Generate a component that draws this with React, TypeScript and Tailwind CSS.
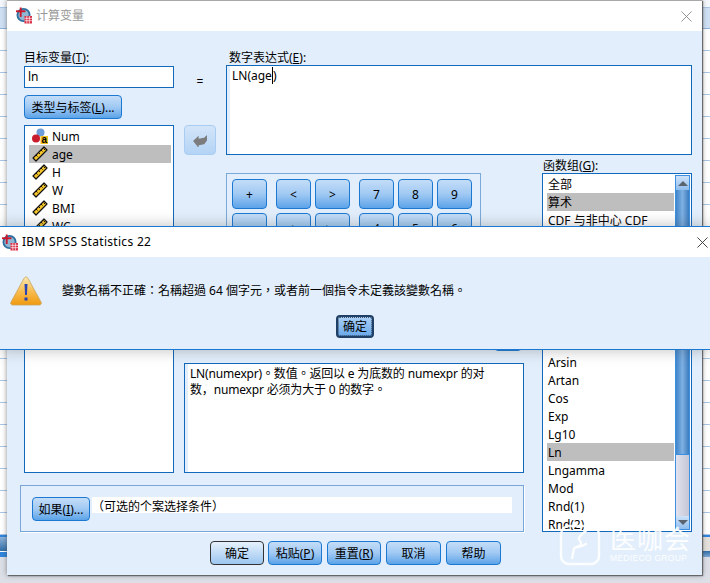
const font = "font-['Noto_Sans','Noto_Sans_CJK_SC',sans-serif]";
const tcFont = "font-['Noto_Sans','Noto_Sans_CJK_TC',sans-serif]";
const blueBtn =
  "flex items-center justify-center rounded-[4px] border border-[#1b79d2] bg-linear-to-b from-[#c4ddf8] via-[#a0c9f3] to-[#5ba3e8] text-[12px] text-black";

function SpssIcon({ className }: { className: string }) {
  return (
    <svg viewBox="0 0 17 17" className={className}>
      <circle cx="8" cy="8" r="7.5" fill="#2f6f9f" />
      <circle cx="8" cy="8" r="5.5" fill="#8fb6d3" />
      <rect x="4" y="0" width="2" height="10" fill="#c9182b" />
      <rect x="0" y="3" width="10" height="2" fill="#c9182b" />
      <rect x="9" y="9" width="8" height="8" fill="#d8324a" />
      <path d="M9 11.5h8M9 14h8M11.5 9v8M14.2 9v8" stroke="#fff" strokeWidth="0.7" />
    </svg>
  );
}

function RulerIcon() {
  return (
    <svg viewBox="0 0 16 16" className="h-[16px] w-[16px] shrink-0">
      <path d="M1 12 12 1l3 3L4 15z" fill="#f5c52c" stroke="#111" strokeWidth="1.2" strokeLinejoin="round" />
      <path d="M4 9l1.5 1.5M6.5 6.5 8 8M9 4l1.5 1.5M11.5 2.5 13 4" stroke="#111" strokeWidth="1" />
    </svg>
  );
}

function NominalIcon() {
  return (
    <svg viewBox="0 0 16 16" className="h-[16px] w-[16px] shrink-0">
      <circle cx="8.5" cy="4.5" r="4" fill="#6f9fd8" />
      <circle cx="4" cy="10.5" r="4" fill="#c91c2c" />
      <rect x="8.5" y="8" width="7.5" height="8" fill="#f4c21f" />
      <text x="12.2" y="15" textAnchor="middle" fontSize="10" fontWeight="700" fontFamily="Liberation Sans, sans-serif" fill="#000">
        a
      </text>
    </svg>
  );
}

function Scrollbar({ thumbBottom }: { thumbBottom?: number }) {
  return (
    <div className="flex w-[15px] shrink-0 flex-col border border-[#3d8fe0] bg-linear-to-r from-[#e2e3ee] to-[#c5c6d6]">
      <div className="flex h-[14px] shrink-0 items-center justify-center bg-linear-to-b from-[#cfe3f8] to-[#8fbdee]">
        <div className="h-0 w-0 border-x-[5px] border-b-[5px] border-x-transparent border-b-[#5a6470]" />
      </div>
      <div
        className="shrink-0 border-b border-[#3d8fe0] bg-linear-to-r from-[#3f86cc] via-[#7fb0e2] to-[#3a7cc0]"
        style={{ height: thumbBottom ?? 60 }}
      />
      <div className="flex-1" />
      <div className="flex h-[13px] shrink-0 items-center justify-center bg-linear-to-b from-[#cfe3f8] to-[#8fbdee]">
        <div className="h-0 w-0 border-x-[5px] border-t-[5px] border-x-transparent border-t-[#5a6470]" />
      </div>
    </div>
  );
}

function FuncList({
  items,
  selected,
  thumb,
  className,
}: {
  items: string[];
  selected: string;
  thumb: number;
  className: string;
}) {
  return (
    <div className={`flex overflow-hidden border border-[#1268bb] bg-white p-[1px] ${className}`}>
      <div className="min-w-0 flex-1 overflow-hidden pl-[3px] pr-[1px]">
        {items.map((t) => (
          <div key={t} className={`flex h-[18px] items-center pl-[1px] pt-[2px] text-[12px] whitespace-nowrap ${t === selected ? "bg-[#bebebe]" : ""}`}>
            {t}
          </div>
        ))}
      </div>
      <Scrollbar thumbBottom={thumb} />
    </div>
  );
}

function Background() {
  const lines = Array.from({ length: 23 }, (_, i) => i);
  return (
    <div className="flex h-[583px] w-[710px] flex-col bg-[#f4f7fb]">
      <div className="h-[8px] border-b border-[#a9c6e6]" />
      <div className="h-[21px] border-b border-[#8db1d8] bg-[#cfe0f5]" />
      {lines.map((i) => (
        <div key={i} className="h-[22px] shrink-0 border-b border-[#a9c6e6] bg-white" />
      ))}
      <div className="h-[2px] bg-[#2f86dc]" />
      <div className="flex h-[14px]">
        <div className="w-[355px] bg-linear-to-b from-[#8fb4dc] to-[#2f6ea8]" />
        <div className="flex-1 bg-[#e4e1dc]" />
      </div>
      <div className="flex h-[6px]">
        <div className="w-[355px] border-t border-white bg-[#2f86dc]" />
        <div className="flex-1 bg-linear-to-b from-[#2f6ea8] to-[#7fa9d6]" />
      </div>
      <div className="flex-1 bg-[#dcdfe6]" />
    </div>
  );
}

function Watermark() {
  return (
    <div className="pointer-events-none absolute left-[559px] top-[523px] flex items-start gap-[9px] text-white/90">
      <svg viewBox="0 0 42 44" className="h-[44px] w-[42px]" fill="none" stroke="currentColor" strokeWidth="2.4" strokeLinecap="round">
        <rect x="2" y="3" width="38" height="38" rx="8" />
        <path d="M30 3c-2 6-9 8-10 12-1 3 3 3 2 6-1 4-6 2-7 5-1 3-1 6-2 9" />
        <path d="M18 24c3 0 6-1 9-3" />
      </svg>
      <div className="flex flex-col items-start">
        <div className="mt-[2px] text-[26px] leading-[28px] tracking-[1px]">医咖会</div>
        <div className="text-[8.5px] leading-[10px] whitespace-nowrap font-['Liberation_Sans',sans-serif] tracking-[0.3px]">MEDIECO GROUP</div>
      </div>
    </div>
  );
}

function ComputeDialog() {
  const vars = ["Num", "age", "H", "W", "BMI", "WC"];
  const keys1 = ["+", "-", "*", "/", "**"];
  const keys2 = ["<", ">", "<=", ">=", "=", "~=", "&", "|", "~", "( )"];
  const keys3 = ["7", "8", "9", "4", "5", "6", "1", "2", "3", "0", ".", ""];
  const key = `${blueBtn} h-[30px] w-[35px] pt-[1px]`;

  return (
    <div className="absolute left-[7px] top-0 flex h-[575px] w-[695px] flex-col border-t border-[#a8a8a8] bg-[#e2eefb] shadow-[0_0_5px_rgba(60,60,60,0.6),1px_1px_1px_rgba(90,90,90,0.8)]">
      <div className="flex h-[30px] shrink-0 items-center bg-white pl-[9px] pr-[10px]">
        <SpssIcon className="mt-[-2px] h-[17px] w-[16px]" />
        <span className="ml-[4px] text-[12px] tracking-[0] text-[#9a9a9a]">计算变量</span>
        <svg viewBox="0 0 12 12" className="ml-auto h-[11px] w-[11px]" stroke="#8a8a8a" strokeWidth="1">
          <path d="M0.5 0.5l11 11M11.5 0.5l-11 11" />
        </svg>
      </div>

      <div className="ml-[13px] grid w-[672px] grid-cols-[154px_52px_298px_168px] grid-rows-[127px_315px_59px]">
        {/* left column */}
        <div className="col-start-1 row-span-2 row-start-1 flex flex-col pl-[4px] pt-[19px]">
          <div className="h-[15px] text-[12px] leading-[15px]">
            目标变量(<u>T</u>):
          </div>
          <div className="mt-[1px] flex h-[22px] items-center border border-[#1268bb] bg-white pl-[3px] text-[12px]">ln</div>
          <div className={`${blueBtn} mt-[7px] h-[24px] w-[98px] pt-[2px]`}>
            类型与标签(<u>L</u>)...
          </div>
          <div className="mt-[6px] min-h-0 flex-1 overflow-hidden border border-[#1268bb] bg-white pl-[4px] pr-[2px] pt-[1px]">
            {vars.map((v, i) => (
              <div key={v} className={`flex h-[18px] items-center gap-[4px] pl-[3px] text-[12px] ${v === "age" ? "bg-[#bebebe]" : ""}`}>
                {i === 0 ? <NominalIcon /> : <RulerIcon />}
                <span className="pt-[2px]">{v}</span>
              </div>
            ))}
          </div>
        </div>

        {/* equals and arrow */}
        <div className="col-start-2 row-start-1 flex flex-col pl-[10px] pt-[44px]">
          <div className="h-[14px] w-[32px] text-center text-[12px] leading-[14px]">=</div>
          <div className="mt-[36px] flex h-[30px] w-[32px] items-center justify-center rounded-[4px] border border-[#a9cdf2] bg-linear-to-b from-[#d3e5f9] to-[#b4d3f5]">
            <svg viewBox="0 0 16 14" className="h-[13px] w-[15px]">
              <path d="M0 7.5 6 2v3l6-1 3-3v6l-3 4-6 1v3z" fill="#7c7c7c" />
            </svg>
          </div>
        </div>

        {/* expression */}
        <div className="col-span-2 col-start-3 row-start-1 flex flex-col pt-[19px]">
          <div className="h-[15px] pl-[3px] text-[12px] leading-[15px]">
            数字表达式(<u>E</u>):
          </div>
          <div className="flex h-[90px] border border-[#1268bb] bg-white pl-[5px] text-[12px] leading-[19px] shadow-[inset_3px_0_0_#e2eefb]">
            <span>
              LN(age
              <span className="border-l border-black" />)
            </span>
          </div>
        </div>

        {/* keypad and help */}
        <div className="col-span-2 col-start-2 row-start-2 flex flex-col pl-[10px]">
          <div className="mt-[15px] flex h-[178px] items-end">
            <div className="ml-[42px] flex h-[176px] w-[255px] gap-[9px] self-start border border-[#7ba9d8] pl-[5px] pt-[5px]">
              <div className="flex flex-col gap-[4px]">
                {keys1.map((k) => (
                  <div key={k} className={key}>
                    {k}
                  </div>
                ))}
              </div>
              <div className="grid h-fit grid-cols-2 gap-[4px]">
                {keys2.map((k) => (
                  <div key={k} className={`${key} text-[11px]`}>
                    {k}
                  </div>
                ))}
              </div>
              <div className="grid h-fit grid-cols-3 gap-[4px]">
                {keys3.map((k, i) => (
                  <div key={i} className={key}>
                    {k}
                  </div>
                ))}
              </div>
            </div>
            <div className={`${blueBtn} ml-[13px] h-[24px] w-[28px]`} />
          </div>
          <div className="mt-[12px] h-[110px] border border-[#1268bb] bg-white pl-[5px] pt-[2px] text-[12px] leading-[16px] tracking-[-0.17px] shadow-[inset_3px_0_0_#e2eefb]">
            <div>
              LN(numexpr)<span className={tcFont}>。</span>数值<span className={tcFont}>。</span>返回以 e 为底数的 numexpr 的对
            </div>
            <div>
              数，numexpr 必须为大于 0 的数字<span className={tcFont}>。</span>
            </div>
          </div>
        </div>

        {/* function lists */}
        <div className="col-start-4 row-span-2 row-start-2 flex flex-col pl-[18px]">
          <div className="h-[15px] pl-[1px] text-[12px] leading-[15px]">
            函数组(<u>G</u>):
          </div>
          <FuncList
            className="h-[130px]"
            selected="算术"
            thumb={60}
            items={["全部", "算术", "CDF 与非中心 CDF", "转换", "当前日期/时间", "日期运算"]}
          />
          <div className="mt-[15px] h-[15px] text-[12px]">函数和特殊变量(F):</div>
          <FuncList
            className="h-[199px]"
            selected="Ln"
            thumb={105}
            items={["Abs", "Arsin", "Artan", "Cos", "Exp", "Lg10", "Ln", "Lngamma", "Mod", "Rnd(1)", "Rnd(2)"]}
          />
        </div>

        {/* if row */}
        <div className="col-span-3 col-start-1 row-start-3 mt-[12px] flex h-[47px] border border-[#79a6d6] pl-[11px] pr-[11px] pt-[11px] shadow-[1px_1px_0_#fff]">
          <div className={`${blueBtn} h-[24px] w-[58px] shrink-0 pt-[2px]`}>
            如果(<u>I</u>)...
          </div>
          <div className="ml-[2px] h-[16px] flex-1 bg-white text-[12px] leading-[19px]">（可选的个案选择条件）</div>
        </div>
      </div>

      <div className="ml-[203px] mt-[9px] flex gap-[5px]">
        <div className="mr-[-1px] flex h-[24px] w-[54px] items-center justify-center rounded-[4px] border border-[#333] bg-linear-to-b from-[#e6f1fc] to-[#9cc6f0] pt-[2px] text-[12px]">确定</div>
        <div className={`${blueBtn} h-[24px] w-[54px] pt-[2px]`}>
          粘贴(<u>P</u>)
        </div>
        <div className={`${blueBtn} h-[24px] w-[54px] pt-[2px]`}>
          重置(<u>R</u>)
        </div>
        <div className={`${blueBtn} h-[24px] w-[55px] pt-[2px]`}>取消</div>
        <div className={`${blueBtn} h-[24px] w-[55px] pt-[2px]`}>帮助</div>
      </div>
    </div>
  );
}

function AlertDialog() {
  return (
    <div className="absolute left-0 top-[226px] flex h-[124px] w-[710px] flex-col border-y border-[#1a78d0] bg-[#e2eefb] shadow-[0_0_14px_rgba(70,70,70,0.35)]">
      <div className="flex h-[30px] shrink-0 items-center bg-white pl-[2px] pr-[2px]">
        <SpssIcon className="h-[17px] w-[16px]" />
        <span className="ml-[4px] text-[12px] tracking-[0.3px]">IBM SPSS Statistics 22</span>
        <svg viewBox="0 0 12 12" className="ml-auto h-[11px] w-[11px]" stroke="#333" strokeWidth="1">
          <path d="M0.5 0.5l11 11M11.5 0.5l-11 11" />
        </svg>
      </div>
      <div className="flex flex-1 flex-col items-center">
        <div className="flex h-[58px] w-full items-center pl-[10px] pt-[6px]">
          <svg viewBox="0 0 32 30" className="mt-[3px] h-[30px] w-[32px] shrink-0">
            <defs>
              <linearGradient id="warn" x1="0" y1="0" x2="0" y2="1">
                <stop offset="0" stopColor="#fbe7b0" />
                <stop offset="0.55" stopColor="#f7b94a" />
                <stop offset="1" stopColor="#f09a10" />
              </linearGradient>
            </defs>
            <path d="M16 1c1 0 1.6.6 2.2 1.7L31 26c.8 1.6 0 3-1.7 3H2.7C1 29 .2 27.600 1 26L13.800 2.700C14.400 1.600 15 1 16 1z" fill="url(#warn)" stroke="#c9a35e" strokeWidth="0.8" />
            <path d="M14.500 8h3l-.6 11h-1.800zM14.500 21.500h3v3h-3z" fill="#2743b5" />
          </svg>
          <span className={`ml-[20px] pt-[3px] text-[12px] whitespace-nowrap ${tcFont}`}>
            變數名稱不正確：名稱超過 64 個字元，或者前一個指令未定義該變數名稱。
          </span>
        </div>
        <div className="flex h-[23px] w-[38px] items-center justify-center rounded-[4px] border-2 border-[#1f3f66] bg-linear-to-b from-[#a9cff6] to-[#6aa9ea] pt-[1px] text-[12px] outline-1 -outline-offset-3 outline-black/60 outline-dotted">确定</div>
      </div>
    </div>
  );
}

export default function App() {
  return (
    <div className={`relative h-[583px] w-[710px] overflow-hidden text-black ${font}`}>
      <Background />
      <ComputeDialog />
      <Watermark />
      <AlertDialog />
    </div>
  );
}
